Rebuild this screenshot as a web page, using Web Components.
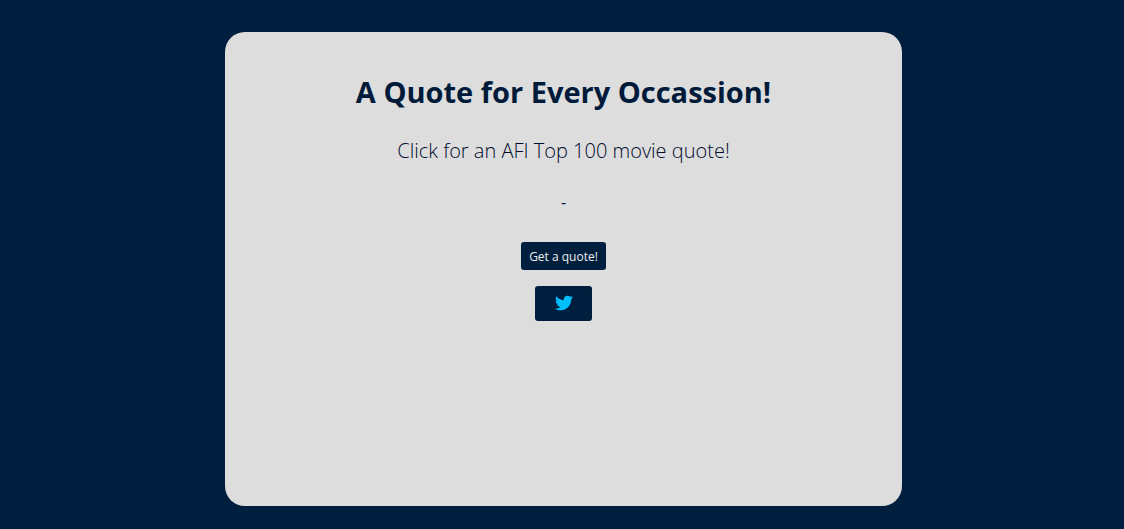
<!DOCTYPE html>
<html lang="en">
<head>
<meta charset="utf-8">
<title>A Quote for Every Occassion!</title>
<style>
body { margin: 0; background: #001f3f; color: #001a3a; font-family: "Open Sans", "Noto Sans", sans-serif; }
</style>
</head>
<body>
<quote-card>
  <span slot="title">A Quote for Every Occassion!</span>
  <span slot="quote">Click for an AFI Top 100 movie quote!</span>
  <span slot="source">-</span>
  <quote-button slot="actions">Get a quote!</quote-button>
  <tweet-link slot="actions"></tweet-link>
</quote-card>
<script>
class QuoteCard extends HTMLElement {
  constructor() {
    super();
    this.attachShadow({ mode: "open" }).innerHTML = `
<style>
:host { display: flex; box-sizing: border-box; min-height: 100vh; padding: 32px calc(20% - 3px) 23px 20%; }
main { flex: 1; display: flex; flex-direction: column; align-items: center; box-sizing: border-box; padding: 40px 16px; background: #ddd; border-radius: 20px; text-align: center; }
h1, p { margin: 0; }
h1 { font-size: 29px; font-weight: 700; line-height: 40px; }
.quote { margin-top: 25px; color: #000c2c; font-size: 20px; font-weight: 300; line-height: 28px; }
.source { margin-top: 27px; font-size: 16px; line-height: 20px; }
.actions { margin-top: 30px; display: flex; flex-direction: column; align-items: center; gap: 16px; }
</style>
<main>
  <h1><slot name="title"></slot></h1>
  <p class="quote"><slot name="quote"></slot></p>
  <p class="source"><slot name="source"></slot></p>
  <div class="actions"><slot name="actions"></slot></div>
</main>`;
  }
}
class QuoteButton extends HTMLElement {
  constructor() {
    super();
    this.attachShadow({ mode: "open" }).innerHTML = `
<style>
:host { display: block; }
button { display: block; height: 28px; padding: 1px 8px 0; border: 0; border-radius: 3px; background: #001f3f; color: #eee; font: 400 12px/27px "Open Sans", sans-serif; cursor: pointer; }
</style>
<button type="button"><slot></slot></button>`;
  }
}
class TweetLink extends HTMLElement {
  constructor() {
    super();
    this.attachShadow({ mode: "open" }).innerHTML = `
<style>
:host { display: block; }
a { display: flex; align-items: center; justify-content: center; box-sizing: border-box; width: 57px; height: 35px; padding-bottom: 2px; border-radius: 3px; background: #001f3f; color: #00bfff; }
svg { display: block; width: 18px; height: 18px; }
</style>
<a href="https://twitter.com/intent/tweet" aria-label="Tweet this quote"><svg viewBox="0 0 512 512" fill="currentColor" aria-hidden="true"><path d="M459.37 151.716c.325 4.548.325 9.097.325 13.645 0 138.72-105.583 298.558-298.558 298.558-59.452 0-114.68-17.219-161.137-47.106 8.447.974 16.568 1.299 25.34 1.299 49.055 0 94.213-16.568 130.274-44.832-46.132-.975-84.792-31.188-98.112-72.772 6.498.974 12.995 1.624 19.818 1.624 9.421 0 18.843-1.3 27.614-3.573-48.081-9.747-84.143-51.98-84.143-102.985v-1.299c13.969 7.797 30.214 12.67 47.431 13.319-28.264-18.843-46.781-51.005-46.781-87.391 0-19.492 5.197-37.36 14.294-52.954 51.655 63.675 129.3 105.258 216.365 109.807-1.624-7.797-2.599-15.918-2.599-24.04 0-57.828 46.782-104.934 104.934-104.934 30.213 0 57.502 12.67 76.67 33.137 23.715-4.548 46.456-13.32 66.599-25.34-7.798 24.366-24.366 44.833-46.132 57.827 21.117-2.273 41.584-8.122 60.426-16.243-14.292 20.791-32.161 39.308-52.628 54.253z"/></svg></a>`;
  }
}
customElements.define("quote-card", QuoteCard);
customElements.define("quote-button", QuoteButton);
customElements.define("tweet-link", TweetLink);
</script>
</body>
</html>
